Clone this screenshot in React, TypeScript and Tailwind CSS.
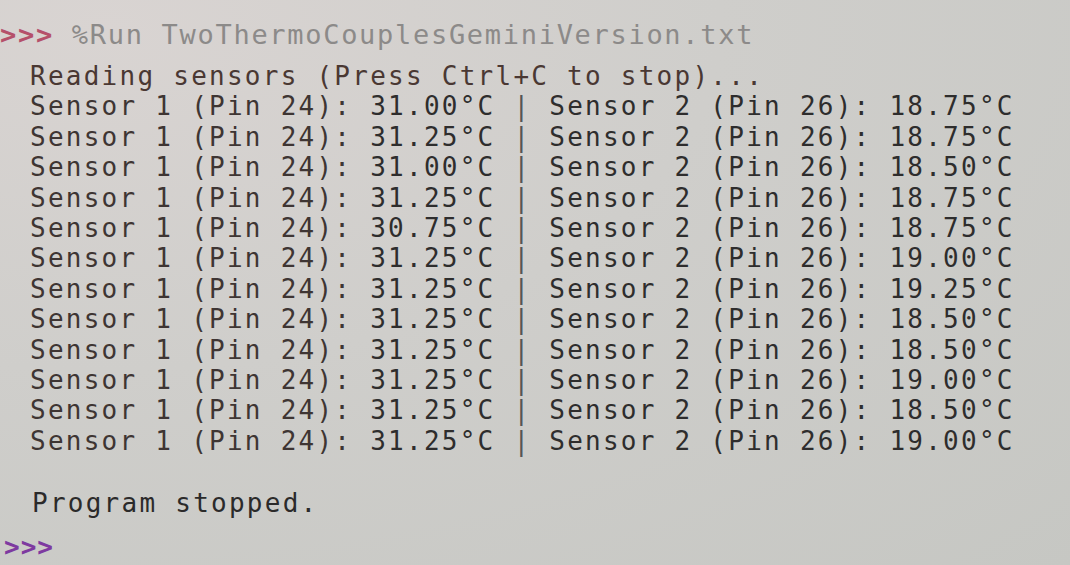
import React from "react";

const rows: [string, string][] = [
  ["31.00", "18.75"],
  ["31.25", "18.75"],
  ["31.00", "18.50"],
  ["31.25", "18.75"],
  ["30.75", "18.75"],
  ["31.25", "19.00"],
  ["31.25", "19.25"],
  ["31.25", "18.50"],
  ["31.25", "18.50"],
  ["31.25", "19.00"],
  ["31.25", "18.50"],
  ["31.25", "19.00"],
];

export default function App() {
  return (
    <div
      className="w-[1070px] h-[565px] overflow-hidden bg-[radial-gradient(ellipse_at_10%_5%,#d9d4d2_0%,#cfcecb_45%,#c6c7c3_100%)] text-[#2b2a2a]"
      style={{ fontFamily: '"DejaVu Sans Mono", "Liberation Mono", monospace' }}
    >
      <div className="pt-[17px] pl-0 text-[27px] leading-[36px] whitespace-pre tracking-[1.7px]">
        <span className="text-[#b5506a] font-bold">&gt;&gt;&gt;</span>
        <span className="text-[#8c8a89]"> %Run TwoThermoCouplesGeminiVersion.txt</span>
      </div>
      <div className="pl-[30px] pt-[8px] text-[26px] leading-[30.4px] tracking-[2.25px] whitespace-pre">
        <div className="text-[#4a3833]">Reading sensors (Press Ctrl+C to stop)...</div>
        {rows.map(([a, b], i) => (
          <div key={i} className="text-[#2e2d2d]">
            <span className="text-[#3e3533]">Sensor 1 (Pin 24): </span>
            {a}°C <span className="text-[#555]">|</span> Sensor 2 (Pin 26): {b}°C
          </div>
        ))}
        <div className="h-[30.4px]" />
        <div className="pt-[1px] pl-[2px] text-[#2b2a2a]">Program stopped.</div>
      </div>
      <div className="pl-[4px] pt-[14px] text-[26px] leading-[30px] tracking-[1px] font-bold text-[#7e3aa0]">
        &gt;&gt;&gt;
      </div>
    </div>
  );
}
